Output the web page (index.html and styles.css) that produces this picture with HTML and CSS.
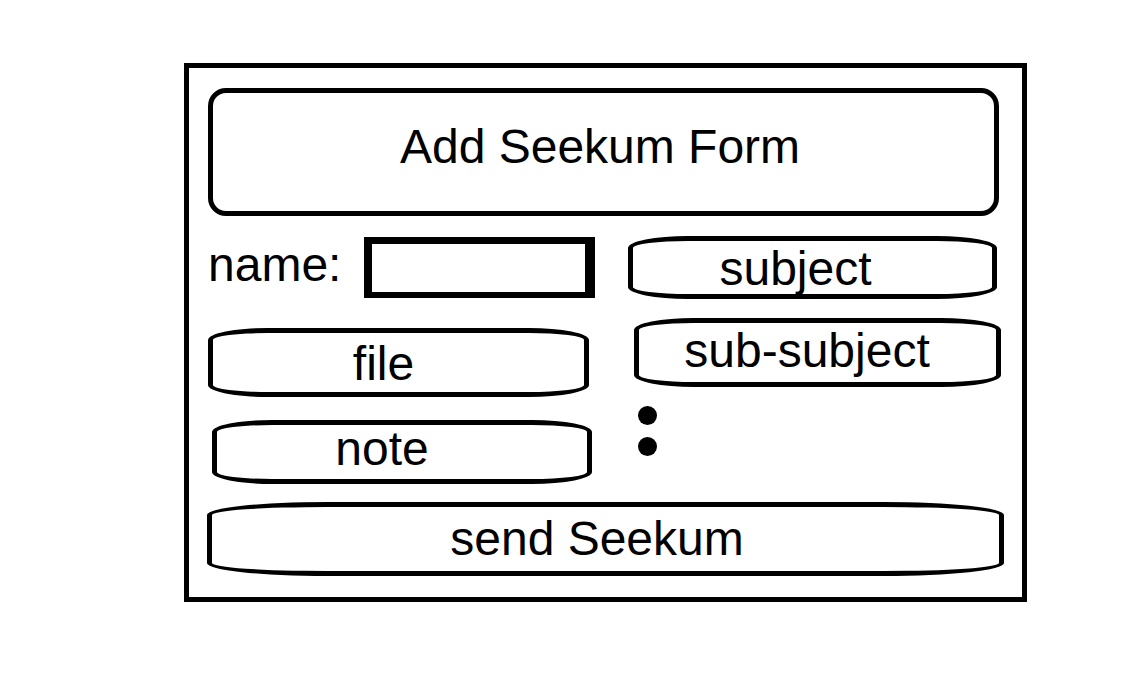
FILE: index.html
```html
<!DOCTYPE html>
<html lang="en">
<head>
<meta charset="utf-8">
<meta name="viewport" content="width=device-width, initial-scale=1">
<title>Add Seekum Form</title>
<link rel="stylesheet" href="styles.css">
</head>
<body>
<main class="page">
  <form class="form">
    <h1 class="form-title">Add Seekum Form</h1>
    <div class="columns">
      <div class="column-main">
        <div class="field">
          <label class="field-label" for="name">name:</label>
          <input class="field-input" id="name" name="name" type="text">
        </div>
        <button class="pill pill-file" type="button">file</button>
        <button class="pill pill-note" type="button">note</button>
      </div>
      <div class="column-side">
        <button class="pill pill-subject" type="button">subject</button>
        <button class="pill pill-sub-subject" type="button">sub-subject</button>
        <div class="more">
          <span class="dot"></span>
          <span class="dot"></span>
        </div>
      </div>
    </div>
    <button class="pill pill-send" type="submit">send Seekum</button>
  </form>
</main>
</body>
</html>
```

FILE: styles.css
```css
* {
  box-sizing: border-box;
}

body {
  margin: 0;
  background: #fff;
  color: #000;
  font-family: "Liberation Sans", Arial, sans-serif;
  font-size: 48px;
  line-height: 48px;
}

.page {
  padding: 63px 117px 63px 184px;
}

.form {
  display: flex;
  flex-direction: column;
  border: 5px solid #000;
  padding: 20px 18px 21px;
}

.form-title {
  margin: 0 5px 20px 1px;
  padding: 30px 7px 40px 0;
  border: 5px solid #000;
  border-radius: 18px;
  font-size: 48px;
  font-weight: 400;
  text-align: center;
}

.columns {
  display: grid;
  grid-template-columns: 388fr 376fr;
  column-gap: 33px;
  margin-bottom: 18px;
}

.column-main,
.column-side {
  display: flex;
  flex-direction: column;
  min-width: 0;
}

.column-main {
  padding-top: 1px;
}

.field {
  display: flex;
  align-items: center;
  gap: 23px;
  margin-bottom: 30px;
}

.field-label {
  padding: 0 0 6px 1px;
}

.field-input {
  flex: 1;
  min-width: 0;
  height: 61px;
  margin: 0;
  padding: 0 8px;
  border: solid #000;
  border-width: 7px 10px 6px 8px;
  border-radius: 0;
  background: #fff;
  color: inherit;
  font: inherit;
}

.pill {
  border: 5px solid #000;
  border-radius: 60px / 12px;
  background: #fff;
  color: inherit;
  font: inherit;
  text-align: center;
  cursor: pointer;
}

.pill-file {
  margin: 0 6px 23px 1px;
  padding: 7px 30px 4px 0;
}

.pill-note {
  margin: 0 3px 0 5px;
  padding: 0 40px 6px 0;
}

.pill-subject {
  margin: 0 7px 19px 0;
  padding: 4px 34px 1px 0;
}

.pill-sub-subject {
  margin: 0 3px 19px 6px;
  padding: 4px 21px 7px 0;
}

.pill-send {
  padding: 8px 17px 8px 0;
  border-radius: 120px / 13px;
}

.more {
  display: flex;
  flex-direction: column;
  gap: 12px;
  padding-left: 10px;
}

.dot {
  width: 19px;
  height: 19px;
  border-radius: 50%;
  background: #000;
}
```
